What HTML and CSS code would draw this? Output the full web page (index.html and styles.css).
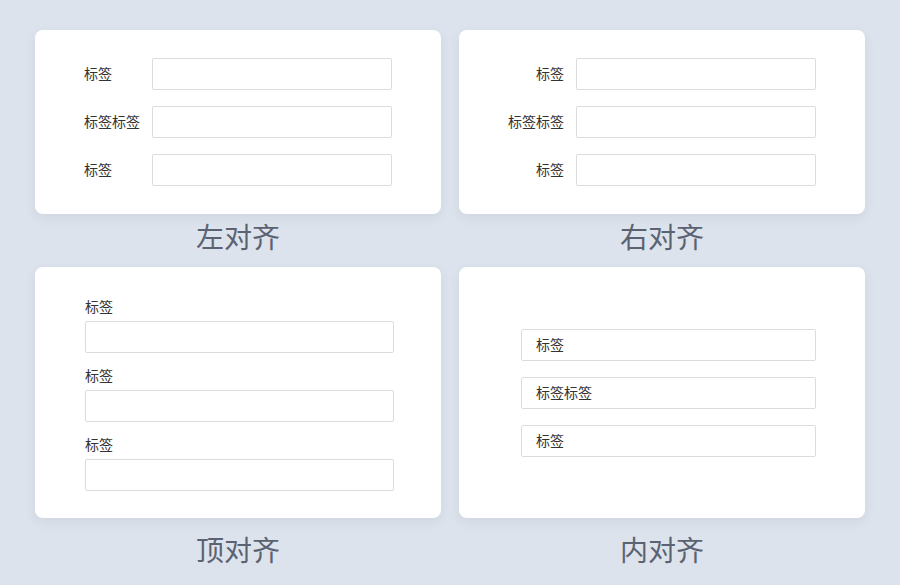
FILE: index.html
```html
<!DOCTYPE html>
<html lang="zh-CN">
<head>
    <meta charset="UTF-8" />
    <title>表单标签对齐</title>
    <meta name="viewport" content="width=device-width, initial-scale=1.0" />
    <link rel="stylesheet" href="styles.css">
</head>
<body>

<div class="board">
    <div class="demo">
        <div class="card form-inline">
            <label>标签</label>
            <input type="text" />
            <label>标签标签</label>
            <input type="text" />
            <label>标签</label>
            <input type="text" />
        </div>
        <div class="caption">左对齐</div>
    </div>

    <div class="demo">
        <div class="card form-inline align-right">
            <label>标签</label>
            <input type="text" />
            <label>标签标签</label>
            <input type="text" />
            <label>标签</label>
            <input type="text" />
        </div>
        <div class="caption">右对齐</div>
    </div>

    <div class="demo demo-bottom">
        <div class="card form-top">
            <div class="field">
                <label>标签</label>
                <input type="text" />
            </div>
            <div class="field">
                <label>标签</label>
                <input type="text" />
            </div>
            <div class="field">
                <label>标签</label>
                <input type="text" />
            </div>
        </div>
        <div class="caption">顶对齐</div>
    </div>

    <div class="demo demo-bottom">
        <div class="card form-inside">
            <input type="text" placeholder="标签" />
            <input type="text" placeholder="标签标签" />
            <input type="text" placeholder="标签" />
        </div>
        <div class="caption">内对齐</div>
    </div>
</div>

</body>
</html>
```

FILE: styles.css
```css
body {
  margin: 0;
  background-color: #dde3ec;
  font-family: "Noto Sans CJK SC", "Noto Sans", sans-serif;
  color: #333;
}
.board {
  display: grid;
  grid-template-columns: 406px 406px;
  column-gap: 18px;
  row-gap: 11px;
  padding: 30px 35px 0;
}
.demo {
  display: flex;
  flex-direction: column;
}
.card {
  background: white;
  border-radius: 8px;
  box-shadow: 0 4px 12px rgba(40, 60, 90, 0.08);
  box-sizing: border-box;
}
.caption {
  margin-top: 2px;
  line-height: 40px;
  font-size: 28px;
  color: #5b6271;
  text-align: center;
}
.demo-bottom .caption {
  margin-top: 11px;
}
label {
  font-size: 14px;
  color: #333;
}
input {
  display: block;
  box-sizing: border-box;
  width: 100%;
  height: 32px;
  margin: 0;
  padding: 0 14px 1px;
  border: 1px solid #dcdcdc;
  border-radius: 2px;
  background: white;
  font-family: inherit;
  font-size: 14px;
  color: #333;
  outline: none;
}
input::placeholder {
  color: #333;
}

/* label beside field */
.form-inline {
  display: grid;
  grid-template-columns: 56px 1fr;
  column-gap: 12px;
  row-gap: 16px;
  align-items: center;
  padding: 28px 49px;
}
.form-inline label {
  white-space: nowrap;
  padding-bottom: 2px;
}
.align-right label {
  text-align: right;
}

/* label above field */
.form-top {
  display: flex;
  flex-direction: column;
  gap: 12px;
  padding: 29px 47px 27px 50px;
}
.form-top label {
  display: block;
  line-height: 20px;
  margin-bottom: 5px;
}

/* label inside field */
.form-inside {
  flex: 1;
  display: flex;
  flex-direction: column;
  justify-content: center;
  gap: 16px;
  padding: 0 49px 0 62px;
}
```
